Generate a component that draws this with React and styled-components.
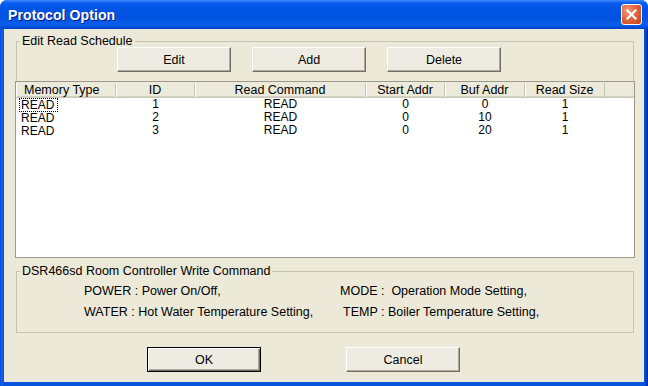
import React from "react";
import styled, { createGlobalStyle } from "styled-components";

const Global = createGlobalStyle`
  html, body { margin: 0; padding: 0; width: 648px; height: 386px; overflow: hidden; background: #fff; }
  * { box-sizing: border-box; }
`;

const Window = styled.div`
  width: 648px;
  height: 386px;
  display: flex;
  flex-direction: column;
  font-family: "Liberation Sans", Arial, sans-serif;
  font-size: 12.5px;
  color: #000;
  background: linear-gradient(to right, #0831D9 0px, #166AEE 1px, #0855DD 3px, #0855DD 644px, #0842C8 646px, #001EA0 648px);
  border-radius: 7px 7px 0 0;
  overflow: hidden;
`;

const TitleBar = styled.div`
  height: 29px;
  flex: none;
  display: flex;
  align-items: center;
  justify-content: space-between;
  padding: 0 6px 0 8px;
  background: linear-gradient(to bottom, #3D8BFF 0px, #0A5CF0 3px, #0055E5 8px, #0052E0 18px, #0A5FEA 24px, #0658E6 26px, #0040C0 29px);
`;

const Title = styled.span`
  color: #fff;
  font-weight: bold;
  font-size: 14px;
  letter-spacing: 0.1px;
  text-shadow: 1px 1px 0 #0A1883;
`;

const CloseButton = styled.div`
  width: 21px;
  height: 21px;
  border: 1px solid #fff;
  border-radius: 3px;
  background: radial-gradient(circle at 30% 30%, #F09A7C 0%, #E2643E 45%, #C5421C 100%);
  display: flex;
  align-items: center;
  justify-content: center;
`;

const Client = styled.div`
  flex: 1;
  margin: 0 4px 4px;
  background: #ECE9D8;
  display: flex;
  flex-direction: column;
`;

const GroupBox = styled.fieldset`
  margin: ${(p) => p.$top}px 0 0 12px;
  width: 618px;
  padding: ${(p) => (p.$open ? "0 0 9px 0" : "4px 0 9px 0")};
  border: 1px solid #C5C2B2;
  border-bottom: ${(p) => (p.$open ? "none" : "1px solid #C5C2B2")};
  border-radius: 0;
  min-width: 0;
`;

const Legend = styled.legend`
  margin-left: 3px;
  padding: 0 2px;
  line-height: 12px;
  font-size: 12.5px;
  color: #000;
`;

const ButtonRow = styled.div`
  display: flex;
  gap: ${(p) => p.$gap}px;
  padding-left: ${(p) => p.$indent}px;
  margin-top: ${(p) => p.$top || 0}px;
`;

const Button = styled.button`
  width: 114px;
  height: 25px;
  padding: 0;
  font-family: "Liberation Sans", Arial, sans-serif;
  font-size: 12.5px;
  color: #000;
  background: #EEECE2;
  border: 1px solid;
  border-color: ${(p) => (p.$default ? "#000" : "#fff #716F64 #716F64 #fff")};
  box-shadow: ${(p) =>
    p.$default
      ? "inset 1px 1px 0 #fff, inset -1px -1px 0 #716F64, inset -2px -2px 0 #ACA899"
      : "inset -1px -1px 0 #ACA899"};
  border-radius: 0;
`;

const ListView = styled.div`
  margin-left: 11px;
  width: 620px;
  height: 177px;
  border: 1px solid #9D9A8C;
  background: #fff;
  overflow: hidden;
`;

const HeaderRow = styled.div`
  display: flex;
  height: 16px;
  background: #EBEADB;
  box-shadow: inset 0 -1px 0 #CBC7B8, inset 0 -2px 0 #D6D2C2;
`;

const HeaderCell = styled.div`
  flex: none;
  width: ${(p) => p.$w}px;
  height: 14px;
  margin-top: 1px;
  line-height: 14px;
  text-align: ${(p) => (p.$left ? "left" : "center")};
  padding-left: ${(p) => (p.$left ? 8 : 0)}px;
  border-right: 1px solid #C7C4B3;
  box-shadow: inset 1px 0 0 #fff;
  white-space: nowrap;
  overflow: hidden;
`;

const HeaderFill = styled.div`
  flex: 1;
`;

const Row = styled.div`
  display: flex;
  height: 13px;
`;

const Cell = styled.div`
  flex: none;
  width: ${(p) => p.$w}px;
  height: 13px;
  font-size: 12px;
  line-height: 13px;
  text-align: ${(p) => (p.$left ? "left" : "center")};
  padding-left: ${(p) => (p.$left ? 3 : 0)}px;
  white-space: nowrap;
`;

const Label = styled.span`
  display: inline-block;
  height: 14px;
  line-height: 12px;
  padding: 0 3px 0 1px;
  border: 1px ${(p) => (p.$focused ? "dotted #000" : "solid transparent")};
`;

const InfoGrid = styled.div`
  display: grid;
  grid-template-columns: 256px 1fr;
  padding-left: 67px;
`;

const InfoText = styled.div`
  line-height: 21px;
  white-space: pre;
  padding-left: ${(p) => p.$indent || 0}px;
`;

const columns = [
  { key: "type", label: "Memory Type", w: 100, left: true },
  { key: "id", label: "ID", w: 79 },
  { key: "cmd", label: "Read Command", w: 171 },
  { key: "start", label: "Start Addr", w: 79 },
  { key: "buf", label: "Buf Addr", w: 80 },
  { key: "size", label: "Read Size", w: 80 },
];

const rows = [
  { type: "READ", id: "1", cmd: "READ", start: "0", buf: "0", size: "1" },
  { type: "READ", id: "2", cmd: "READ", start: "0", buf: "10", size: "1" },
  { type: "READ", id: "3", cmd: "READ", start: "0", buf: "20", size: "1" },
];

export default function App() {
  return (
    <>
      <Global />
      <Window>
        <TitleBar>
          <Title>Protocol Option</Title>
          <CloseButton>
            <svg width="13" height="13" viewBox="0 0 13 13">
              <path d="M2.5 2.5 L10.5 10.5 M10.5 2.5 L2.5 10.5" stroke="#fff" strokeWidth="2.2" strokeLinecap="square" />
            </svg>
          </CloseButton>
        </TitleBar>
        <Client>
          <GroupBox $top={6} $open>
            <Legend>Edit Read Schedule</Legend>
            <ButtonRow $gap={21} $indent={100}>
              <Button>Edit</Button>
              <Button>Add</Button>
              <Button>Delete</Button>
            </ButtonRow>
          </GroupBox>
          <ListView>
            <HeaderRow>
              {columns.map((c) => (
                <HeaderCell key={c.key} $w={c.w} $left={c.left}>
                  {c.label}
                </HeaderCell>
              ))}
              <HeaderFill />
            </HeaderRow>
            {rows.map((r, i) => (
              <Row key={i}>
                {columns.map((c) =>
                  c.left ? (
                    <Cell key={c.key} $w={c.w} $left>
                      <Label $focused={i === 0}>{r[c.key]}</Label>
                    </Cell>
                  ) : (
                    <Cell key={c.key} $w={c.w}>
                      {r[c.key]}
                    </Cell>
                  )
                )}
              </Row>
            ))}
          </ListView>
          <GroupBox $top={7}>
            <Legend>DSR466sd Room Controller Write Command</Legend>
            <InfoGrid>
              <InfoText>POWER : Power On/Off,</InfoText>
              <InfoText>MODE :  Operation Mode Setting,</InfoText>
              <InfoText>WATER : Hot Water Temperature Setting,</InfoText>
              <InfoText $indent={3}>TEMP : Boiler Temperature Setting,</InfoText>
            </InfoGrid>
          </GroupBox>
          <ButtonRow $gap={85} $indent={143} $top={14}>
            <Button $default>OK</Button>
            <Button>Cancel</Button>
          </ButtonRow>
        </Client>
      </Window>
    </>
  );
}
